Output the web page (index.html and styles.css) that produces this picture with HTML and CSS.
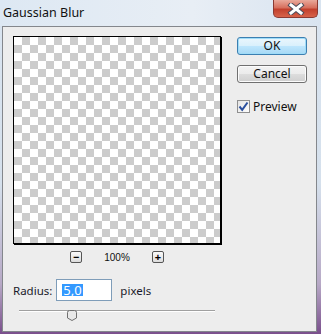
FILE: index.html
```html
<!DOCTYPE html>
<html lang="en">
  <head>
    <meta charset="UTF-8" />
    <title>Gaussian Blur</title>
    <link rel="stylesheet" href="styles.css">
  </head>
  <body>
    <div class="window">
      <div class="titlebar">
        <span class="title">Gaussian Blur</span>
        <div class="close-btn">
          <svg width="18" height="12" viewBox="0 0 18 12">
            <path d="M4 2 L14 10 M14 2 L4 10" stroke="#4d4d5a" stroke-width="5" stroke-linecap="square" />
            <path d="M4 2 L14 10 M14 2 L4 10" stroke="#ffffff" stroke-width="3" stroke-linecap="square" />
          </svg>
        </div>
      </div>
      <div class="client">
        <div class="top">
          <div class="preview"></div>
          <div class="side">
            <button class="btn btn-default">OK</button>
            <button class="btn">Cancel</button>
            <label class="check-row">
              <span class="checkbox">
                <svg width="11" height="11" viewBox="0 0 11 11">
                  <path d="M1.5 5.5 L4.2 8.8 L9.5 1.5" fill="none" stroke="#2a4f9e" stroke-width="2" />
                </svg>
              </span>
              Preview
            </label>
          </div>
        </div>
        <div class="zoom-row">
          <span class="zoom-btn">&minus;</span>
          <span class="zoom-value">100%</span>
          <span class="zoom-btn">+</span>
        </div>
        <div class="radius-row">
          <span class="label">Radius:</span>
          <div class="input"><span class="selected">5,0</span></div>
          <span class="label">pixels</span>
        </div>
        <div class="slider">
          <div class="track"></div>
          <svg class="thumb" width="10" height="11" viewBox="0 0 10 11">
            <path d="M0.5 2.5 Q0.5 0.5 2.5 0.5 L7.5 0.5 Q9.5 0.5 9.5 2.5 L9.5 8 L5 10.5 L0.5 8 Z" fill="#e8e8e8" stroke="#707070" />
          </svg>
        </div>
      </div>
    </div>
  </body>
</html>
```

FILE: styles.css
```css
body {
  margin: 0;
  font-family: "Noto Sans", Arial, sans-serif;
}
.window {
  width: 321px;
  height: 334px;
  display: flex;
  flex-direction: column;
  background: linear-gradient(to bottom, #dae5f1 0%, #d5e0ec 55%, #b7a9c6 85%, #7a4f8c 100%);
}
.titlebar {
  height: 26px;
  display: flex;
  align-items: flex-start;
  justify-content: space-between;
  background: linear-gradient(to right, #dde8f3, #e8eef5 60%, #d9e4f0);
}
.title {
  font-size: 12.5px;
  color: #111;
  margin: 4px 0 0 3px;
}
.close-btn {
  width: 45px;
  height: 18px;
  margin-right: 3px;
  box-sizing: border-box;
  border: 1px solid #8a3a33;
  border-top: none;
  border-radius: 0 0 5px 5px;
  background: linear-gradient(to bottom, #e9a99b 0%, #d7705e 45%, #c2402d 55%, #d7634a 100%);
  display: flex;
  align-items: center;
  justify-content: center;
}
.client {
  flex: 1;
  margin: 0 4px 2px 2px;
  border: 1px solid #84878c;
  background: #ededed;
}
.top {
  display: flex;
  padding: 9px 0 0 10px;
}
.preview {
  width: 206px;
  height: 206px;
  border: 1px solid #000;
  box-shadow: 1px 1px 0 #000;
  background-color: #fff;
  background-image:
    linear-gradient(45deg, #cccccc 25%, transparent 25%, transparent 75%, #cccccc 75%),
    linear-gradient(45deg, #cccccc 25%, transparent 25%, transparent 75%, #cccccc 75%);
  background-size: 16px 16px;
  background-position: 0 0, 8px 8px;
}
.side {
  display: flex;
  flex-direction: column;
  margin-left: 16px;
  padding-top: 1px;
  width: 70px;
}
.btn {
  height: 18px;
  padding: 0;
  font-family: "Noto Sans", Arial, sans-serif;
  font-size: 12px;
  line-height: 16px;
  color: #111;
  border: 1px solid #707070;
  border-radius: 3px;
  background: linear-gradient(to bottom, #f3f3f3 0%, #ebebeb 50%, #dddddd 51%, #cfcfcf 100%);
  box-shadow: inset 0 0 0 1px #fcfcfc;
  margin-bottom: 10px;
}
.btn-default {
  border-color: #3c7fb1;
  background: linear-gradient(to bottom, #eaf6fd 0%, #d9f0fc 50%, #bee6fd 51%, #a7d9f5 100%);
  box-shadow: inset 0 0 0 1px #9fdcf8;
}
.check-row {
  display: flex;
  align-items: center;
  margin-top: 5px;
  font-size: 12px;
  color: #111;
}
.checkbox {
  width: 11px;
  height: 11px;
  border: 1px solid #8f8f8f;
  background: linear-gradient(to bottom right, #e4e4e4, #fdfdfd);
  margin-right: 3px;
  display: flex;
}
.zoom-row {
  display: flex;
  align-items: center;
  justify-content: center;
  width: 208px;
  margin: 7px 0 0 10px;
  gap: 22px;
}
.zoom-btn {
  width: 10px;
  height: 10px;
  border: 1px solid #555;
  border-radius: 2px;
  background: linear-gradient(to bottom, #fafafa, #dcdcdc);
  font-size: 11px;
  line-height: 10px;
  text-align: center;
  color: #000;
  font-weight: bold;
}
.zoom-value {
  font-family: "Liberation Sans", Arial, sans-serif;
  font-size: 10px;
  color: #111;
}
.radius-row {
  display: flex;
  align-items: center;
  margin: 16px 0 0 10px;
}
.label {
  font-size: 11.5px;
  color: #1a1a2a;
}
.input {
  width: 49px;
  height: 20px;
  margin: 0 8px 0 4px;
  border: 1px solid #7f9db9;
  background: #fff;
  display: flex;
  align-items: center;
  padding-left: 5px;
  box-sizing: content-box;
}
.selected {
  background: #3399ff;
  color: #fff;
  font-size: 13px;
  line-height: 12px;
  padding: 0 1px;
}
.slider {
  position: relative;
  height: 11px;
  margin: 9px 0 0 16px;
  width: 196px;
}
.track {
  margin-top: 4px;
  height: 1px;
  background: #a0a0a0;
  border-bottom: 1px solid #fff;
}
.thumb {
  position: absolute;
  left: 48px;
  top: 0;
}
```
